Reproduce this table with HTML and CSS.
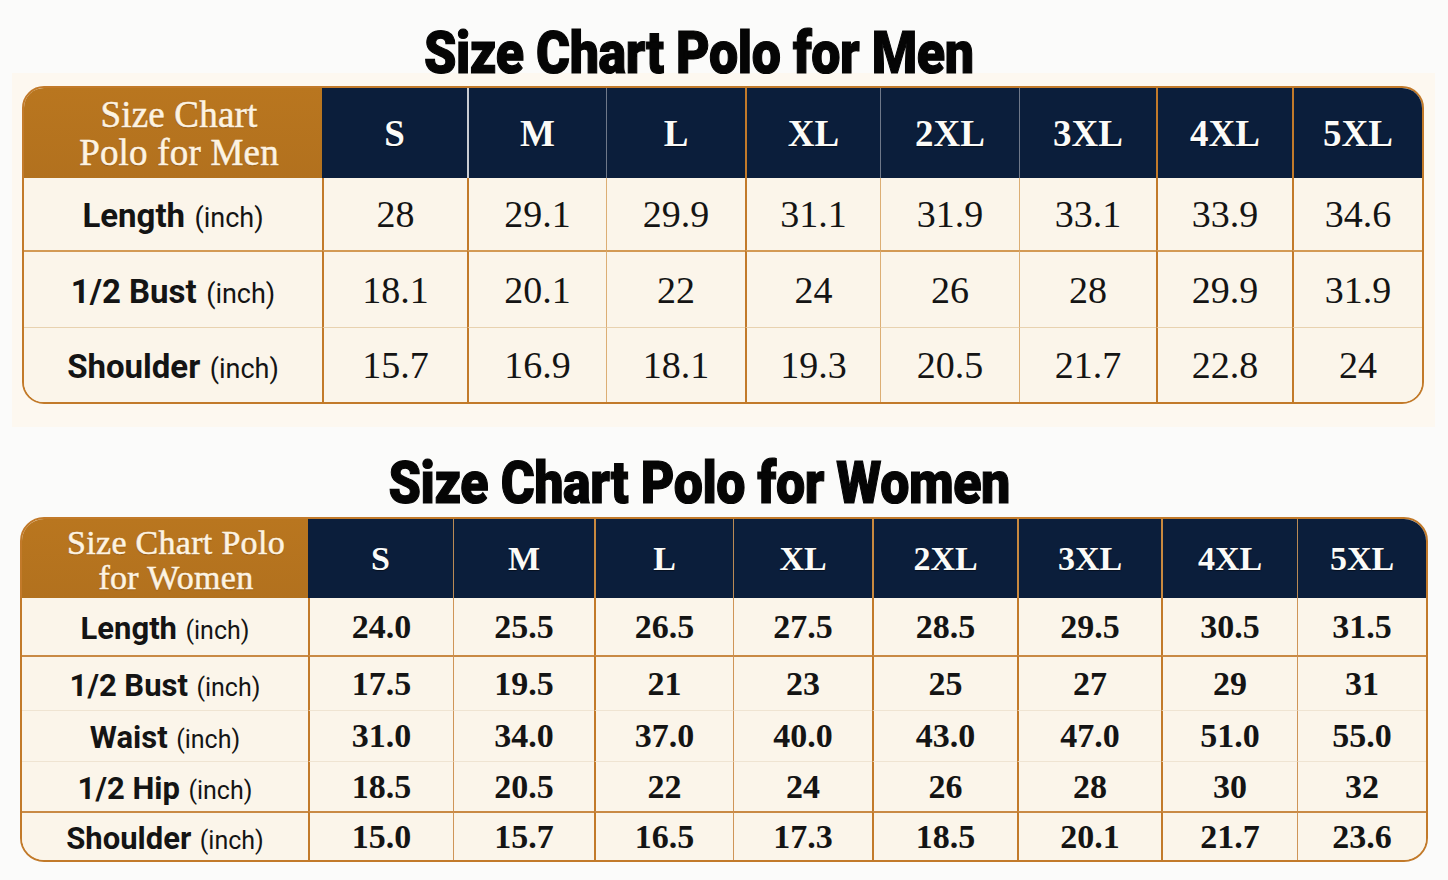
FILE: index.html
```html
<!DOCTYPE html>
<html lang="en">
<head>
<meta charset="utf-8">
<title>Size Chart Polo</title>
<link rel="stylesheet" href="styles.css">
</head>
<body>
<div class="page">
  <h1 class="title title-men"><span class="title-text">Size Chart Polo for Men</span></h1>
  <div class="band">
    <div class="chart men">
      <table>
        <colgroup>
          <col class="m0"><col class="m1"><col class="m2"><col class="m3"><col class="m4"><col class="m5"><col class="m6"><col class="m7"><col class="m8">
        </colgroup>
        <thead>
          <tr class="head">
            <th class="corner">Size Chart<br>Polo for Men</th>
            <th>S</th><th>M</th><th>L</th><th>XL</th><th>2XL</th><th>3XL</th><th>4XL</th><th>5XL</th>
          </tr>
        </thead>
        <tbody>
          <tr class="r1">
            <td class="label"><b>Length</b> <span class="unit">(inch)</span></td>
            <td>28</td><td>29.1</td><td>29.9</td><td>31.1</td><td>31.9</td><td>33.1</td><td>33.9</td><td>34.6</td>
          </tr>
          <tr class="r2">
            <td class="label"><b>1/2 Bust</b> <span class="unit">(inch)</span></td>
            <td>18.1</td><td>20.1</td><td>22</td><td>24</td><td>26</td><td>28</td><td>29.9</td><td>31.9</td>
          </tr>
          <tr class="r3">
            <td class="label"><b>Shoulder</b> <span class="unit">(inch)</span></td>
            <td>15.7</td><td>16.9</td><td>18.1</td><td>19.3</td><td>20.5</td><td>21.7</td><td>22.8</td><td>24</td>
          </tr>
        </tbody>
      </table>
    </div>
  </div>

  <h1 class="title title-women"><span class="title-text">Size Chart Polo for Women</span></h1>
  <div class="chart women">
    <table>
      <colgroup>
        <col class="w0"><col class="w1"><col class="w2"><col class="w3"><col class="w4"><col class="w5"><col class="w6"><col class="w7"><col class="w8">
      </colgroup>
      <thead>
        <tr class="head">
          <th class="corner">Size Chart Polo<br>for Women</th>
          <th>S</th><th>M</th><th>L</th><th>XL</th><th>2XL</th><th>3XL</th><th>4XL</th><th>5XL</th>
        </tr>
      </thead>
      <tbody>
        <tr class="r1">
          <td class="label"><b>Length</b> <span class="unit">(inch)</span></td>
          <td>24.0</td><td>25.5</td><td>26.5</td><td>27.5</td><td>28.5</td><td>29.5</td><td>30.5</td><td>31.5</td>
        </tr>
        <tr class="r2">
          <td class="label"><b>1/2 Bust</b> <span class="unit">(inch)</span></td>
          <td>17.5</td><td>19.5</td><td>21</td><td>23</td><td>25</td><td>27</td><td>29</td><td>31</td>
        </tr>
        <tr class="r3">
          <td class="label"><b>Waist</b> <span class="unit">(inch)</span></td>
          <td>31.0</td><td>34.0</td><td>37.0</td><td>40.0</td><td>43.0</td><td>47.0</td><td>51.0</td><td>55.0</td>
        </tr>
        <tr class="r4">
          <td class="label"><b>1/2 Hip</b> <span class="unit">(inch)</span></td>
          <td>18.5</td><td>20.5</td><td>22</td><td>24</td><td>26</td><td>28</td><td>30</td><td>32</td>
        </tr>
        <tr class="r5">
          <td class="label"><b>Shoulder</b> <span class="unit">(inch)</span></td>
          <td>15.0</td><td>15.7</td><td>16.5</td><td>17.3</td><td>18.5</td><td>20.1</td><td>21.7</td><td>23.6</td>
        </tr>
      </tbody>
    </table>
  </div>
</div>
</body>
</html>
```

FILE: styles.css
```css
html, body {
  margin: 0;
  padding: 0;
  background: #fbfbfa;
}

.page {
  width: 1448px;
  height: 880px;
  overflow: hidden;
  font-family: "Liberation Serif", "Times New Roman", serif;
  color: #111;
}

/* ---------- titles ---------- */
.title {
  margin: 0;
  padding-right: 50px;
  text-align: center;
  font-family: Roboto, "Liberation Sans", sans-serif;
  font-weight: 900;
  font-size: 60px;
  color: #050505;
  white-space: nowrap;
}
.title-text {
  display: inline-block;
  transform: scaleX(0.865);
  letter-spacing: -0.5px;
  -webkit-text-stroke: 1.2px #050505;
}
.title-men {
  padding-top: 34px;
  line-height: 37px;
  height: 39px;
  position: relative;
  z-index: 1;
}
.title-women {
  margin-top: 24px;
  line-height: 64px;
  height: 66px;
}

/* ---------- cream band ---------- */
.band {
  margin: 0 13px 0 12px;
  padding: 13px 11px 23px 10px;
  background: #fdf8f0;
}

/* ---------- chart ---------- */
.chart {
  border: 2px solid #c27a2a;
  border-radius: 22px;
  overflow: hidden;
  background: #fbf5ea;
}
.chart.men { width: 1398px; }
.chart.women {
  width: 1404px;
  margin-left: 20px;
  border-radius: 24px;
}

.chart table {
  width: 100%;
  table-layout: fixed;
  border-collapse: separate;
  border-spacing: 0;
}

.chart th,
.chart td {
  box-sizing: border-box;
  padding: 0;
  text-align: center;
  vertical-align: middle;
  white-space: nowrap;
}

/* column widths */
.m0 { width: 298px; } .m1 { width: 145px; } .m2 { width: 139px; } .m3 { width: 139px; }
.m4 { width: 135px; } .m5 { width: 139px; } .m6 { width: 137px; } .m7 { width: 136px; } .m8 { width: 130px; }

.w0 { width: 286px; } .w1 { width: 145px; } .w2 { width: 141px; } .w3 { width: 139px; }
.w4 { width: 139px; } .w5 { width: 145px; } .w6 { width: 144px; } .w7 { width: 136px; } .w8 { width: 129px; }

/* header */
.head th {
  background: #0b1e3b;
  color: #fbfbf8;
  font-weight: 700;
  text-shadow: 0 1px 1px rgba(0, 0, 0, 0.5);
}
.head th.corner {
  background: linear-gradient(180deg, #b9761f 0%, #b2711e 100%);
  color: #fdf3e2;
  font-weight: 400;
  text-shadow: 0 1px 1px rgba(80, 40, 0, 0.35);
  -webkit-text-stroke: 0.5px #fdf3e2;
}

.men .head th { height: 90px; font-size: 37px; }
.men .head th.corner { font-size: 37px; line-height: 38px; padding: 2px 0 0 12px; letter-spacing: 0.2px; }
.women .head th { height: 79px; font-size: 34px; }
.women .head th.corner { font-size: 34px; line-height: 35px; padding: 2px 0 0 22px; letter-spacing: 0.3px; }

/* body cells */
.chart td {
  background: #fbf5ea;
  color: #141414;
}
.men td { font-size: 38px; font-weight: 400; }
.women td { font-size: 34px; font-weight: 700; }

.label {
  font-family: Roboto, "Liberation Sans", sans-serif;
  color: #0d0d0d;
}
.label b { font-weight: 700; }
.label .unit { font-weight: 400; }
.men .label b { font-size: 33px; }
.men .label .unit { font-size: 27px; }
.women .label b { font-size: 31px; }
.women .label .unit { font-size: 25px; }

/* row heights and separators - men */
.men .r1 td { height: 72px; }
.men .r2 td { height: 77px; border-top: 2px solid #d39a55; }
.men .r3 td { height: 75px; border-top: 1px solid #e8d2b0; }

/* row heights and separators - women */
.women .r1 td { height: 57px; }
.women .r2 td { height: 55px; border-top: 2px solid #c98a45; }
.women .r3 td { height: 51px; border-top: 1px solid #efe4d2; }
.women .r4 td { height: 50px; border-top: 1px solid #efe4d2; }
.women .r5 td { height: 49px; border-top: 2px solid #c98a45; }

/* column dividers - men */
.men td:nth-child(2),
.men td:nth-child(3),
.men td:nth-child(5),
.men td:nth-child(8),
.men td:nth-child(9) { border-left: 2px solid #c27a2a; }
.men td:nth-child(4),
.men td:nth-child(6),
.men td:nth-child(7) { border-left: 1px solid #dcae74; }

.men th:nth-child(3) { border-left: 2px solid #c9ccd2; }
.men th:nth-child(4),
.men th:nth-child(6),
.men th:nth-child(7) { border-left: 1px solid #6f7889; }
.men th:nth-child(5),
.men th:nth-child(8),
.men th:nth-child(9) { border-left: 2px solid #c27a2a; }

/* column dividers - women */
.women td:nth-child(2),
.women td:nth-child(4),
.women td:nth-child(6),
.women td:nth-child(7),
.women td:nth-child(8) { border-left: 2px solid #c27a2a; }
.women td:nth-child(3),
.women td:nth-child(5),
.women td:nth-child(9) { border-left: 1px solid #cf9558; }

.women th:nth-child(3),
.women th:nth-child(5),
.women th:nth-child(9) { border-left: 1px solid #b98a55; }
.women th:nth-child(4),
.women th:nth-child(6),
.women th:nth-child(7),
.women th:nth-child(8) { border-left: 2px solid #c9893f; }
```
